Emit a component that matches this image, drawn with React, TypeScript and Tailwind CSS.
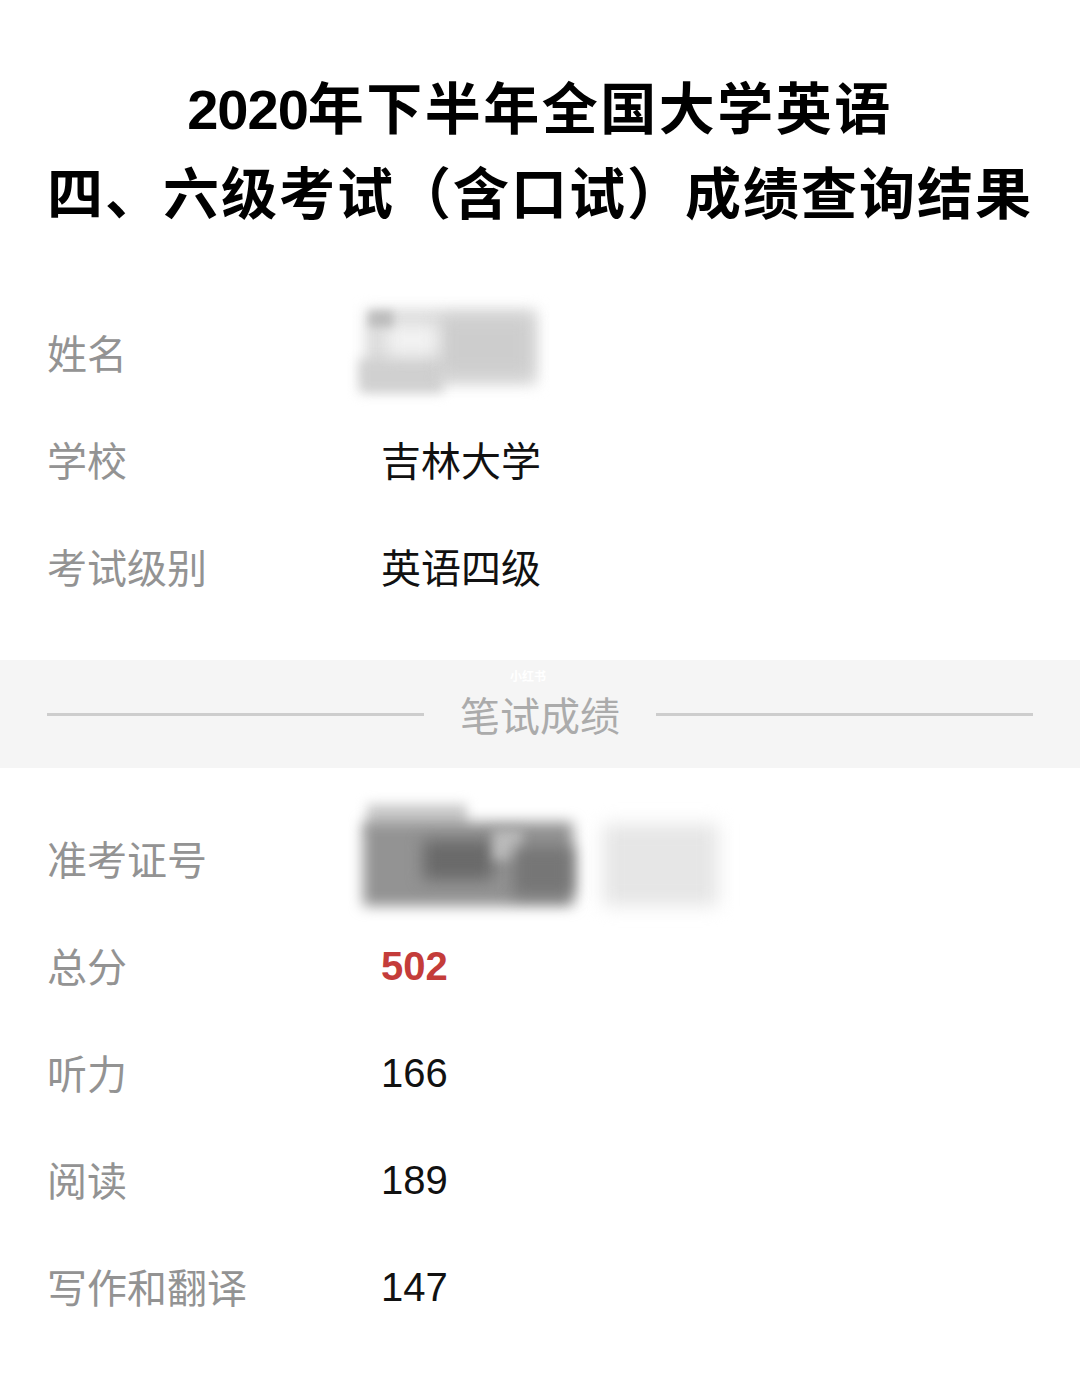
const font = "font-['Noto_Sans_CJK_SC','Noto_Sans',sans-serif]";
const numFont = "font-['Liberation_Sans','Noto_Sans_CJK_SC',sans-serif]";

function Row({ label, children }: { label: string; children?: React.ReactNode }) {
  return (
    <div className="flex h-[107px] items-center px-[47px]">
      <div className="w-[334px] text-[40px] leading-none text-[#939393]">{label}</div>
      <div className="relative flex-1 text-[40px] leading-none text-[#111]">{children}</div>
    </div>
  );
}

// scribbled-out name
function NameSmudge() {
  return (
    <div className="relative -ml-[24px] h-[110px] w-[190px]">
      <div className="absolute left-[8px] top-[12px] h-[76px] w-[172px] bg-[#dcdcdc] blur-[7px]" />
      <div className="absolute left-[2px] top-[62px] h-[34px] w-[84px] bg-[#d0d0d0] blur-[6px]" />
      <div className="absolute left-[84px] top-[20px] h-[58px] w-[90px] bg-[#cdcdcd] blur-[8px]" />
      <div className="absolute left-[30px] top-[28px] h-[30px] w-[50px] bg-[#f2f2f2] blur-[8px]" />
      <div className="absolute left-[12px] top-[14px] h-[16px] w-[24px] bg-[#bdbdbd] blur-[4px]" />
    </div>
  );
}

// scribbled-out ticket number
function TicketSmudge() {
  return (
    <div className="relative -ml-[18px] h-[115px] w-[360px]">
      <div className="absolute left-[4px] top-[4px] h-[30px] w-[100px] bg-[#cbcbcb] blur-[6px]" />
      <div className="absolute left-[0px] top-[22px] h-[84px] w-[210px] bg-[#939393] blur-[7px]" />
      <div className="absolute left-[60px] top-[40px] h-[40px] w-[70px] bg-[#6a6a6a] blur-[8px]" />
      <div className="absolute left-[130px] top-[30px] h-[30px] w-[30px] bg-[#bdbdbd] blur-[6px]" />
      <div className="absolute left-[150px] top-[46px] h-[50px] w-[60px] bg-[#767676] blur-[8px]" />
      <div className="absolute left-[240px] top-[24px] h-[82px] w-[115px] bg-[#e6e6e6] blur-[9px]" />
    </div>
  );
}

export default function App() {
  return (
    <div className={`${font} min-h-[1374px] w-[1080px] bg-white`}>
      <div className="pt-[65px] text-center text-[56px] font-bold leading-[80px] text-black">
        <div className="tracking-[2.5px]">
          <span className={`${numFont} tracking-[-1px]`}>2020</span>年下半年全国大学英语
        </div>
        <div className="tracking-[2px]">四、六级考试（含口试）成绩查询结果</div>
      </div>

      <div className="mt-[68px]">
        <Row label="姓名">
          <NameSmudge />
        </Row>
        <Row label="学校">吉林大学</Row>
        <Row label="考试级别">英语四级</Row>
      </div>

      <div className="relative mt-[41px] flex h-[108px] items-center gap-[36px] bg-[#f5f5f5] px-[47px]">
        <div className="h-[3px] flex-1 bg-[#cdcdcd]" />
        <div className="text-[40px] leading-none text-[#ababab]">笔试成绩</div>
        <div className="h-[3px] flex-1 bg-[#cdcdcd]" />
        <div className="absolute left-[510px] top-[10px] text-[12px] font-bold leading-none text-white">小红书</div>
      </div>

      <div className="mt-[36px]">
        <Row label="准考证号">
          <TicketSmudge />
        </Row>
        <Row label="总分">
          <span className={`${numFont} font-bold text-[#c43c3a]`}>502</span>
        </Row>
        <Row label="听力">
          <span className={numFont}>166</span>
        </Row>
        <Row label="阅读">
          <span className={numFont}>189</span>
        </Row>
        <Row label="写作和翻译">
          <span className={numFont}>147</span>
        </Row>
      </div>
    </div>
  );
}
